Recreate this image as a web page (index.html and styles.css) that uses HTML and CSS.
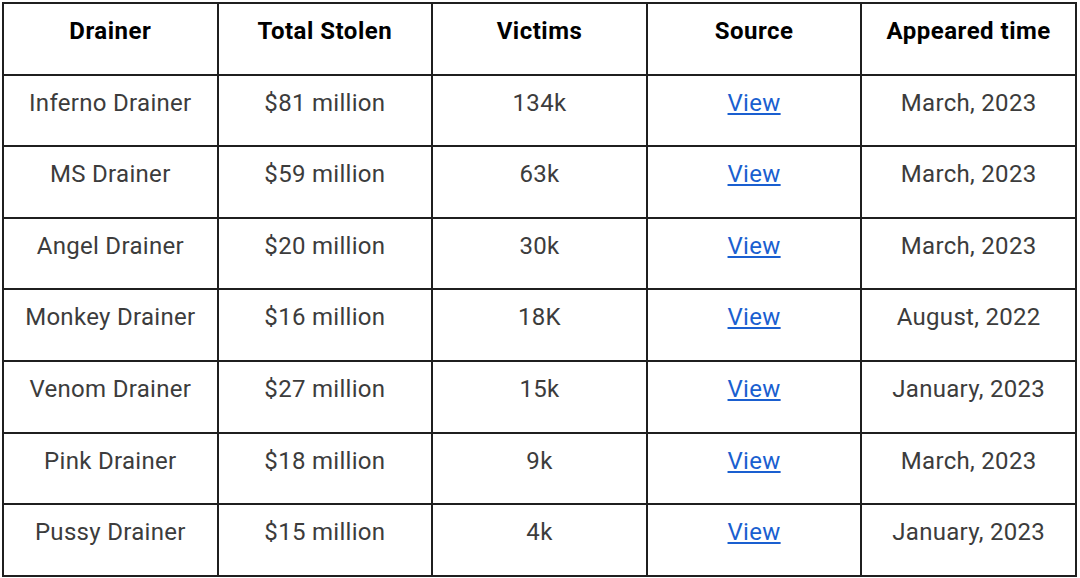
FILE: index.html
```html
<!DOCTYPE html>
<html>
<head>
<meta charset="utf-8">
<link rel="stylesheet" href="styles.css">
</head>
<body>
<table class="drainers">
  <colgroup><col><col><col><col><col></colgroup>
  <thead>
    <tr><th>Drainer</th><th>Total Stolen</th><th>Victims</th><th>Source</th><th>Appeared time</th></tr>
  </thead>
  <tbody>
    <tr><td>Inferno Drainer</td><td>$81 million</td><td>134k</td><td><a href="#">View</a></td><td>March, 2023</td></tr>
    <tr><td>MS Drainer</td><td>$59 million</td><td>63k</td><td><a href="#">View</a></td><td>March, 2023</td></tr>
    <tr><td>Angel Drainer</td><td>$20 million</td><td>30k</td><td><a href="#">View</a></td><td>March, 2023</td></tr>
    <tr><td>Monkey Drainer</td><td>$16 million</td><td>18K</td><td><a href="#">View</a></td><td>August, 2022</td></tr>
    <tr><td>Venom Drainer</td><td>$27 million</td><td>15k</td><td><a href="#">View</a></td><td>January, 2023</td></tr>
    <tr><td>Pink Drainer</td><td>$18 million</td><td>9k</td><td><a href="#">View</a></td><td>March, 2023</td></tr>
    <tr><td>Pussy Drainer</td><td>$15 million</td><td>4k</td><td><a href="#">View</a></td><td>January, 2023</td></tr>
  </tbody>
</table>
</body>
</html>
```

FILE: styles.css
```css
html, body {
  margin: 0;
  padding: 0;
  background: #ffffff;
}
body {
  padding: 2px 0 0 2px;
  font-family: Roboto, "Liberation Sans", sans-serif;
}
.drainers {
  border-collapse: collapse;
  table-layout: fixed;
  width: 1075px;
}
.drainers col {
  width: 20%;
}
.drainers th,
.drainers td {
  border: 2px solid #1f1f1f;
  height: 71.6px;
  box-sizing: border-box;
  padding: 13px 2px 0;
  vertical-align: top;
  text-align: center;
  font-size: 24px;
  line-height: 28px;
  letter-spacing: 0.3px;
  white-space: nowrap;
}
.drainers th {
  font-weight: 700;
  color: #000000;
  letter-spacing: 0.5px;
}
.drainers td {
  font-weight: 400;
  color: #3c3c3c;
}
.drainers a {
  color: #1a5fd0;
  text-decoration: underline;
}
```
